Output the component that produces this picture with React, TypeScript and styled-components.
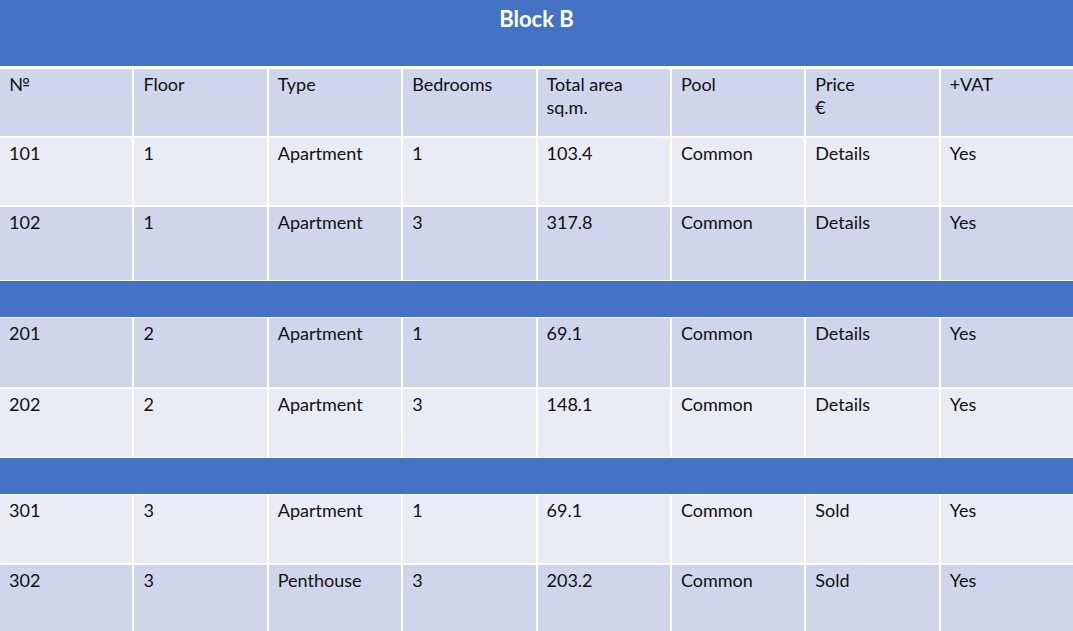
import React from "react";
import styled, { createGlobalStyle } from "styled-components";

const Global = createGlobalStyle`
  html, body { margin: 0; padding: 0; background: #ffffff; }
  body { font-family: Lato, "Open Sans", sans-serif; }
`;

const Page = styled.div`
  width: 1073px;
  height: 631px;
  overflow: hidden;
  background: #ffffff;
  display: flex;
  flex-direction: column;
`;

const TitleBar = styled.div`
  height: 66px;
  flex-shrink: 0;
  background: #4472c4;
  color: #ffffff;
  font-weight: 700;
  font-size: 22px;
  display: flex;
  justify-content: center;
  padding-top: 6px;
  box-sizing: border-box;
  line-height: 26px;
  margin-bottom: 3px;
`;

const Row = styled.div<{ $h: number; $mb: number }>`
  display: grid;
  grid-template-columns: repeat(8, 1fr);
  column-gap: 2px;
  height: ${(p) => p.$h}px;
  margin-bottom: ${(p) => p.$mb}px;
  flex-shrink: 0;
`;

const Cell = styled.div<{ $tone: "dark" | "light" }>`
  background: ${(p) => (p.$tone === "dark" ? "#cfd5ea" : "#e9ebf5")};
  color: #111111;
  font-size: 18px;
  line-height: 23px;
  padding: 4px 0 0 9px;
  box-sizing: border-box;
  white-space: pre-line;
`;

const Divider = styled.div<{ $mb: number }>`
  height: 36px;
  background: #4472c4;
  margin-bottom: ${(p) => p.$mb}px;
  flex-shrink: 0;
`;

type RowDef =
  | { kind: "row"; cells: string[]; h: number; tone: "dark" | "light"; mb: number }
  | { kind: "div"; mb: number };

const rows: RowDef[] = [
  {
    kind: "row",
    cells: ["№", "Floor", "Type", "Bedrooms", "Total area\nsq.m.", "Pool", "Price\n€", "+VAT"],
    h: 67,
    tone: "dark",
    mb: 2,
  },
  { kind: "row", cells: ["101", "1", "Apartment", "1", "103.4", "Common", "Details", "Yes"], h: 67, tone: "light", mb: 2 },
  { kind: "row", cells: ["102", "1", "Apartment", "3", "317.8", "Common", "Details", "Yes"], h: 73, tone: "dark", mb: 1 },
  { kind: "div", mb: 1 },
  { kind: "row", cells: ["201", "2", "Apartment", "1", "69.1", "Common", "Details", "Yes"], h: 69, tone: "dark", mb: 2 },
  { kind: "row", cells: ["202", "2", "Apartment", "3", "148.1", "Common", "Details", "Yes"], h: 68, tone: "light", mb: 1 },
  { kind: "div", mb: 1 },
  { kind: "row", cells: ["301", "3", "Apartment", "1", "69.1", "Common", "Sold", "Yes"], h: 68, tone: "light", mb: 2 },
  { kind: "row", cells: ["302", "3", "Penthouse", "3", "203.2", "Common", "Sold", "Yes"], h: 70, tone: "dark", mb: 0 },
];

export default function App() {
  return (
    <>
      <Global />
      <Page>
        <TitleBar>Block B</TitleBar>
        {rows.map((r, i) =>
          r.kind === "div" ? (
            <Divider key={i} $mb={r.mb} />
          ) : (
            <Row key={i} $h={r.h} $mb={r.mb}>
              {r.cells.map((c, j) => (
                <Cell key={j} $tone={r.tone}>
                  {c}
                </Cell>
              ))}
            </Row>
          )
        )}
      </Page>
    </>
  );
}
